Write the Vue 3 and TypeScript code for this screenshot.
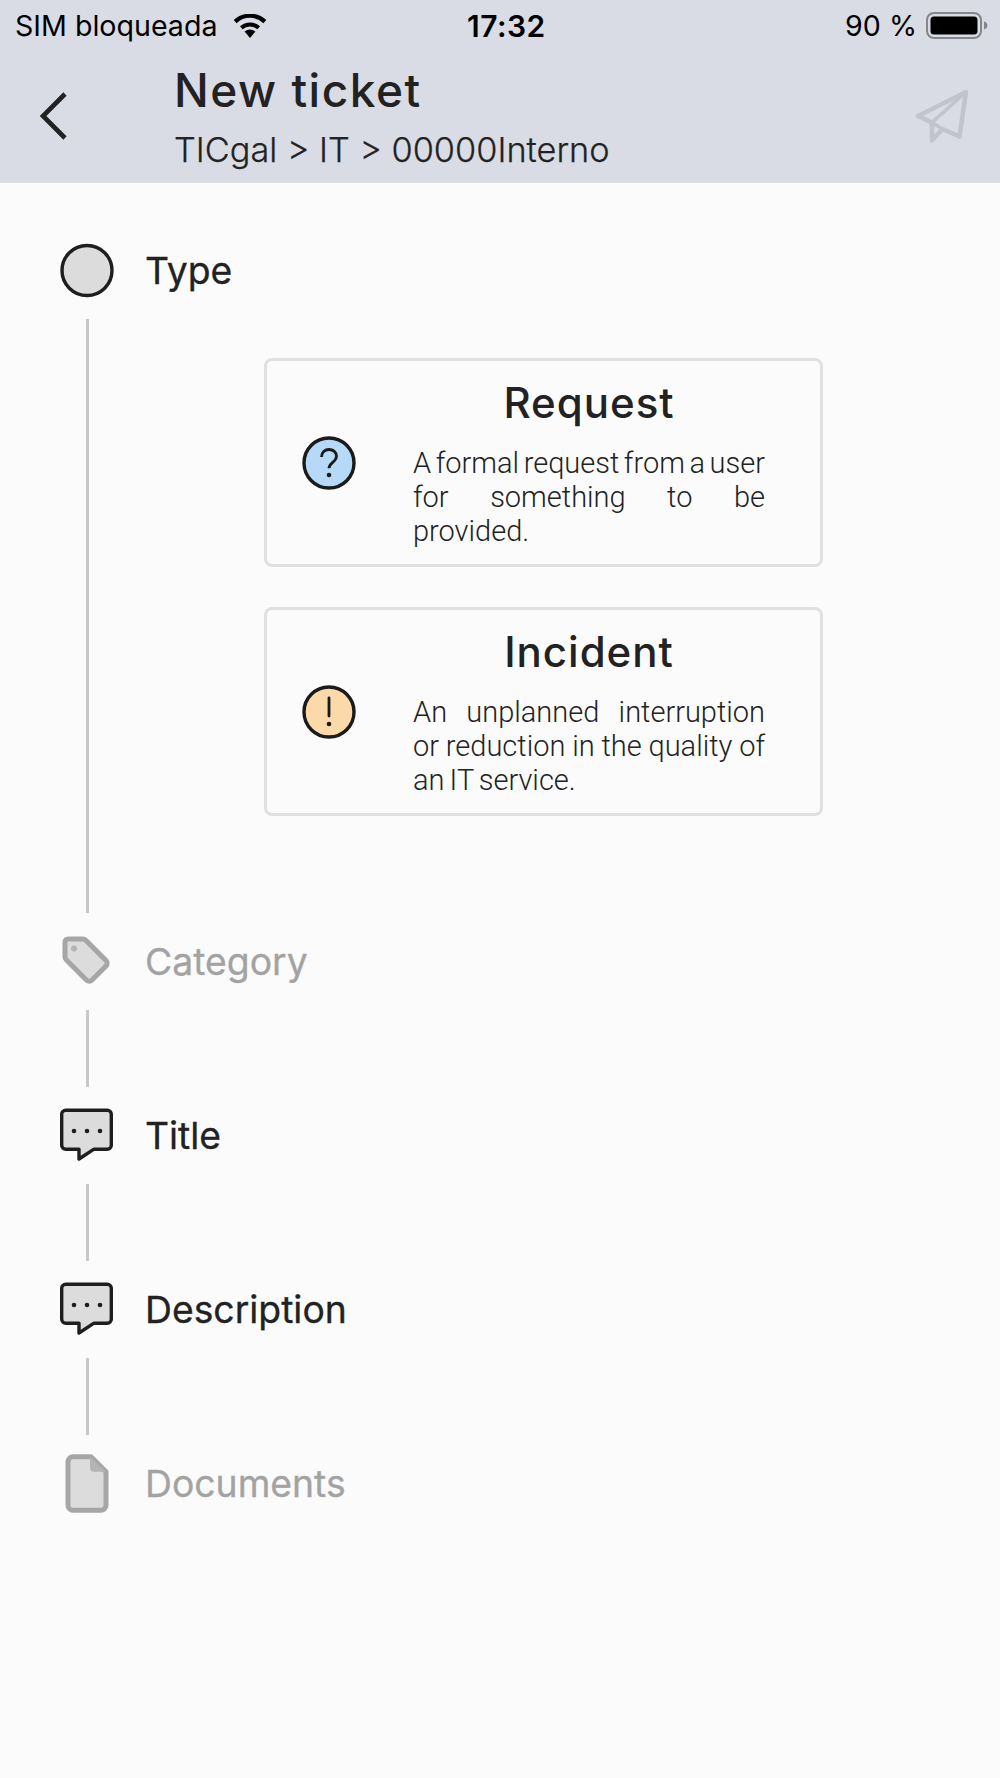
<template>
  <div class="page">
    <header class="top">
      <div class="status">
        <div class="status-left">
          <span>SIM bloqueada</span>
          <svg class="wifi" viewBox="0 0 34 24">
            <path d="M17 24 11.6 17.6a8.2 8.2 0 0 1 10.8 0Z" fill="#000" />
            <path d="M8.3 13.8a13 13 0 0 1 17.4 0" fill="none" stroke="#000" stroke-width="4" />
            <path d="M2.2 7.6a21.6 21.6 0 0 1 29.6 0" fill="none" stroke="#000" stroke-width="4.2" />
          </svg>
        </div>
        <span class="time">17:32</span>
        <div class="status-right">
          <span>90 %</span>
          <svg class="battery" viewBox="0 0 62 27">
            <rect x="1" y="1" width="54" height="25" rx="7" fill="none" stroke="#85868b" stroke-width="2" />
            <rect x="4.5" y="4.5" width="47" height="18" rx="3.5" fill="#000" />
            <path d="M58 9.5c2.4.6 3.4 2.2 3.4 4s-1 3.4-3.4 4Z" fill="#85868b" />
          </svg>
        </div>
      </div>
      <div class="nav">
        <svg class="back" viewBox="0 0 30 50">
          <path d="M27 3 5 25l22 22" fill="none" stroke="#222" stroke-width="4.6" />
        </svg>
        <div class="heading">
          <h1>New ticket</h1>
          <p>TICgal &gt; IT &gt; 00000Interno</p>
        </div>
        <svg class="send" viewBox="0 0 54 54">
          <path d="M51 3 3 27l14 6.5 0 18 10.500-11.500 17 7.500Z" fill="none" stroke="#c1c4cc" stroke-width="4.600" stroke-linejoin="round" />
          <path d="M51 3 17 33.500l10.500 6.500" fill="none" stroke="#c1c4cc" stroke-width="3.600" stroke-linejoin="round" />
        </svg>
      </div>
    </header>

    <main class="steps">
      <template v-for="(step, i) in steps" :key="step.label">
        <div class="step" :class="{ muted: step.muted }">
          <svg class="step-icon" viewBox="0 0 60 60">
            <circle v-if="step.icon === 'circle'" cx="30" cy="29.500" r="25" fill="#dcdcdc" stroke="#1e1e1e" stroke-width="3.400" />
            <g v-else-if="step.icon === 'tag'">
              <path d="M11 7h15a4 4 0 0 1 2.800 1.200L49 28.400a4 4 0 0 1 0 5.600L35 48a4 4 0 0 1-5.600 0L9.200 27.800A4 4 0 0 1 8 25V10a3 3 0 0 1 3-3Z" fill="#dcdcdc" stroke="#a6a6a6" stroke-width="5" stroke-linejoin="round" />
              <circle cx="17" cy="16.500" r="3" fill="#b4b4b4" />
            </g>
            <g v-else-if="step.icon === 'chat'">
              <path d="M8.700 4.200h41.600a4 4 0 0 1 4 4v31a4 4 0 0 1-4 4H37L22 53v-9.800H8.700a4 4 0 0 1-4-4v-31a4 4 0 0 1 4-4Z" fill="#dcdcdc" stroke="#1e1e1e" stroke-width="3.400" stroke-linejoin="round" />
              <circle cx="17" cy="25" r="2.300" fill="#1e1e1e" />
              <circle cx="30" cy="25" r="2.300" fill="#1e1e1e" />
              <circle cx="43" cy="25" r="2.300" fill="#1e1e1e" />
            </g>
            <g v-else>
              <path d="M16 2.800h18l15 15v33.500a5 5 0 0 1-5 5H16a5 5 0 0 1-5-5V7.800a5 5 0 0 1 5-5Z" fill="#dcdcdc" stroke="#a6a6a6" stroke-width="5" stroke-linejoin="round" />
              <path d="M33 2.800v11a4 4 0 0 0 4 4h12Z" fill="#b4b4b4" />
            </g>
          </svg>
          <span class="step-label">{{ step.label }}</span>
        </div>

        <div v-if="i === 0" class="connector-row">
          <div class="connector tall"></div>
          <div class="cards">
            <div v-for="c in cards" :key="c.title" class="card" :class="c.kind">
              <svg class="card-icon" viewBox="0 0 54 54">
                <circle cx="27" cy="27" r="25" :fill="c.fill" stroke="#1a1a1a" stroke-width="3.400" />
                <template v-if="c.kind === 'question'">
                  <path d="M19.500 21c0-4.500 3.300-7.500 7.500-7.500s7.500 2.800 7.500 6.800c0 6-7.500 6-7.500 12" fill="none" stroke="#1a1a1a" stroke-width="2.800" />
                  <circle cx="27" cy="39" r="2.300" fill="#1a1a1a" />
                </template>
                <template v-else>
                  <path d="M27 13v18" fill="none" stroke="#1a1a1a" stroke-width="2.800" stroke-linecap="round" />
                  <circle cx="27" cy="39" r="2.300" fill="#1a1a1a" />
                </template>
              </svg>
              <div class="card-text">
                <h2>{{ c.title }}</h2>
                <p>{{ c.text }}</p>
              </div>
            </div>
          </div>
        </div>
        <div v-else-if="i < steps.length - 1" class="connector"></div>
      </template>
    </main>
  </div>
</template>

<script setup lang="ts">
interface Step {
  label: string;
  icon: 'circle' | 'tag' | 'chat' | 'doc';
  muted?: boolean;
}

const steps: Step[] = [
  { label: 'Type', icon: 'circle' },
  { label: 'Category', icon: 'tag', muted: true },
  { label: 'Title', icon: 'chat' },
  { label: 'Description', icon: 'chat' },
  { label: 'Documents', icon: 'doc', muted: true },
];

const cards = [
  {
    title: 'Request',
    kind: 'question',
    fill: '#b5d9f7',
    text: 'A formal request from a user for something to be provided.',
  },
  {
    title: 'Incident',
    kind: 'alert',
    fill: '#fbd9a8',
    text: 'An unplanned interruption or reduction in the quality of an IT service.',
  },
];
</script>

<style>
html,
body {
  background: #fbfbfb;
}
</style>

<style scoped>
.page {
  width: 1000px;
  height: 1778px;
  background: #fbfbfb;
  font-family: Inter, 'Liberation Sans', sans-serif;
  color: #222;
  overflow: hidden;
}

.top {
  height: 183px;
  background: #d9dce5;
  box-sizing: border-box;
  padding-top: 8px;
}

.status {
  height: 34px;
  padding: 0 12px 0 15px;
  display: grid;
  grid-template-columns: 452px auto 1fr;
  align-items: center;
  font-size: 28.600px;
  color: #000;
}

.status-left,
.status-right {
  display: flex;
  align-items: center;
}

.status-left {
  gap: 16px;
}

.status-right {
  justify-content: flex-end;
  gap: 9px;
}

.time {
  font-size: 30px;
  font-weight: 600;
  letter-spacing: 0.5px;
  line-height: 32px;
}

.wifi {
  width: 34px;
  height: 24px;
}

.battery {
  width: 62px;
  height: 27px;
}

.nav {
  display: flex;
  align-items: flex-start;
  height: 130px;
}

.back {
  flex: none;
  margin: 49px 0 0 38px;
  width: 30px;
  height: 50px;
}

.send {
  flex: none;
  margin: 47px 31px 0 auto;
  width: 54px;
  height: 54px;
}

.heading {
  margin: 20px 0 0 106px;
}

.heading h1 {
  margin: 0;
  font-size: 46px;
  font-weight: 500;
  letter-spacing: 1.500px;
  line-height: 56px;
}

.heading p {
  margin: 10px 0 0;
  font-size: 34.300px;
  font-weight: 300;
  line-height: 44px;
  -webkit-text-stroke: 0.25px;
}

.steps {
  padding-top: 39px;
}

.step {
  height: 97px;
  display: flex;
  align-items: center;
  padding-left: 57px;
}

.step-icon {
  width: 60px;
  height: 60px;
  flex: none;
}

.step-label {
  margin-left: 28px;
  font-size: 37.300px;
  font-weight: 400;
  -webkit-text-stroke: 0.3px;
}

.step.muted .step-label {
  color: #a3a3a3;
}

.connector {
  width: 3px;
  height: 77px;
  margin-left: 86px;
  background: #c8c8c8;
}

.connector-row {
  display: flex;
  height: 594px;
}

.connector.tall {
  height: 100%;
  flex: none;
}

.cards {
  margin-left: 175px;
  padding-top: 39px;
  display: flex;
  flex-direction: column;
  gap: 40px;
}

.card {
  width: 559px;
  height: 209px;
  box-sizing: border-box;
  border: 3px solid #e0e0e0;
  border-radius: 8px;
  display: flex;
  align-items: center;
  padding-left: 35px;
}

.card-icon {
  width: 54px;
  height: 54px;
  flex: none;
}

.card-text {
  margin-left: 57px;
  width: 352px;
}

.card-text h2 {
  margin: 0 0 19px;
  padding-top: 2px;
  text-align: center;
  font-size: 42px;
  font-weight: 500;
  letter-spacing: 1px;
  line-height: 48px;
}

.card-text p {
  margin: 0;
  font-family: Roboto, sans-serif;
  font-size: 29px;
  font-weight: 300;
  line-height: 34px;
  text-align: justify;
  word-spacing: -2px;
}

.card.question .card-text p {
  word-spacing: -3px;
}
</style>
